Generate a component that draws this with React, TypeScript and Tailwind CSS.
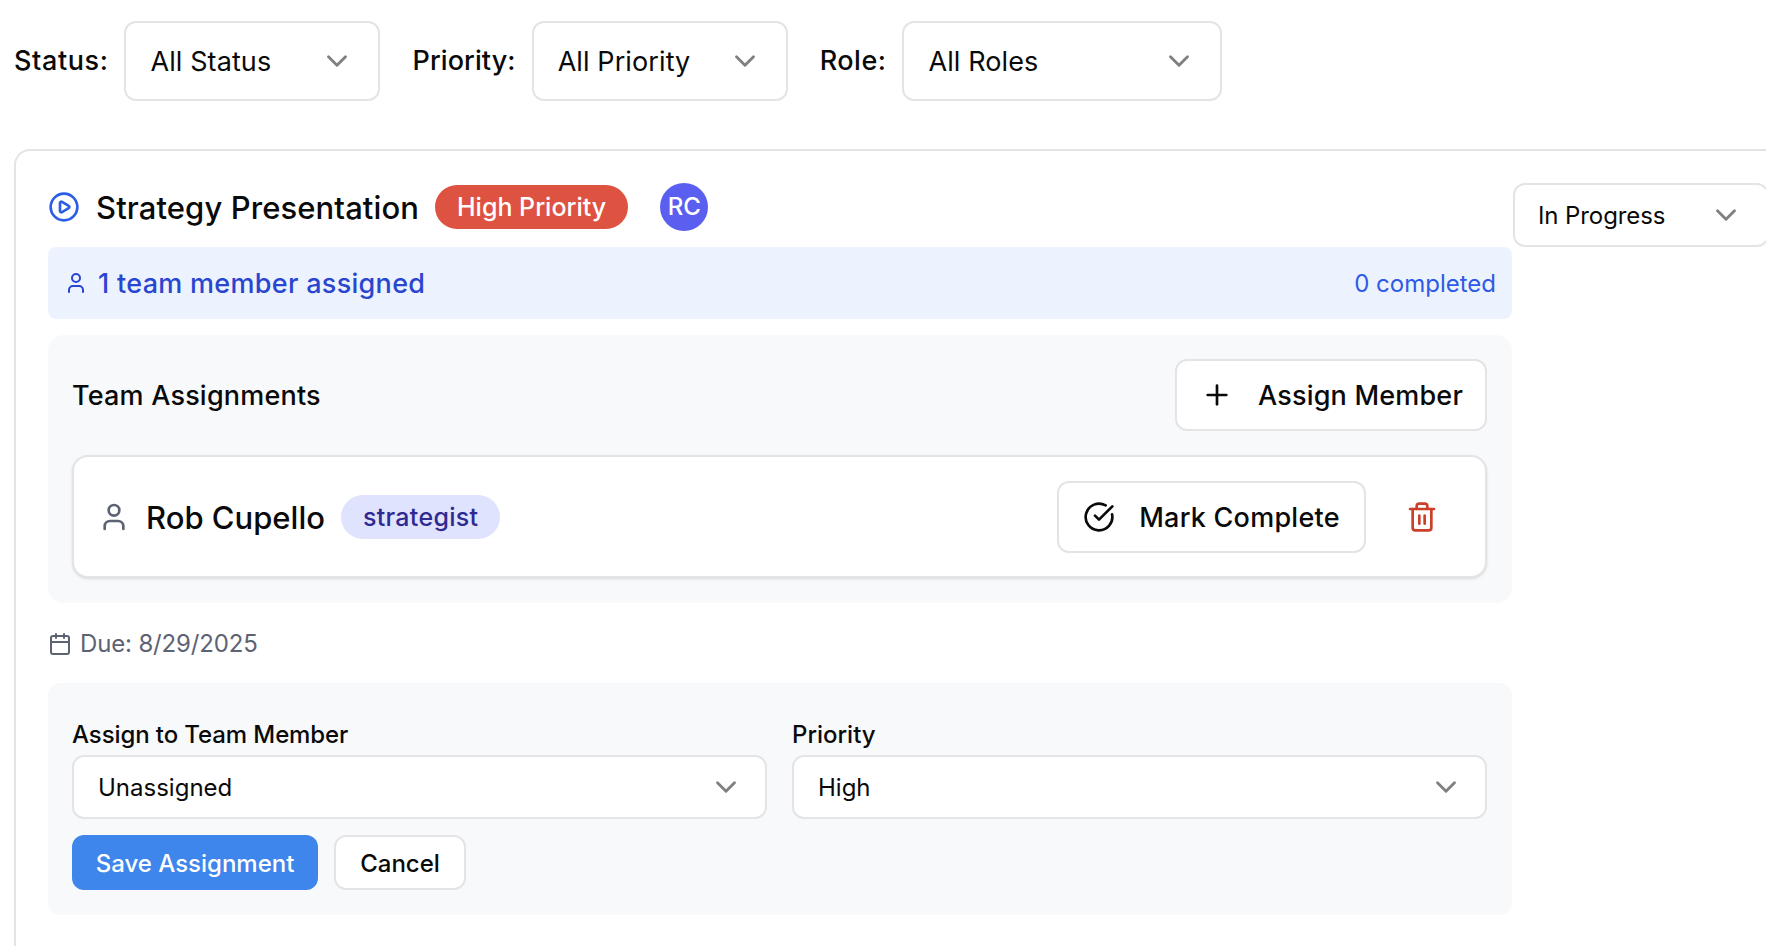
import { Calendar, ChevronDown, CircleCheckBig, CirclePlay, Plus, Trash2, User } from 'lucide-react'

function Select({ label, className }: { label: string; className: string }) {
  return (
    <div className={`flex items-center justify-between bg-white border-2 border-[#e4e4e7] rounded-[12px] ${className}`}>
      <span className="pt-[2px]">{label}</span>
      <ChevronDown className="text-[#808080] shrink-0" size={34} strokeWidth={2} />
    </div>
  )
}

function FilterSelect({ title, value, width, tracking }: { title: string; value: string; width: string; tracking: string }) {
  return (
    <div className="flex items-center gap-[16px]">
      <span className={`font-medium text-[#0a0a0a] pt-[1px] ${tracking}`}>{title}</span>
      <Select label={value} className={`${width} h-[80px] pl-[24px] pr-[24px] text-[#0a0a0a] tracking-[0.1px]`} />
    </div>
  )
}

export default function App() {
  return (
    <div className="w-[1766px] h-[946px] overflow-hidden bg-white pl-[14px] pt-[21px] text-[#0a0a0a] text-[27px] font-['Inter',sans-serif]">
      {/* Filters */}
      <div className="flex items-center gap-[32px]">
        <FilterSelect title="Status:" value="All Status" width="w-[256px]" tracking="tracking-[0.6px]" />
        <FilterSelect title="Priority:" value="All Priority" width="w-[256px]" tracking="tracking-[0.1px]" />
        <FilterSelect title="Role:" value="All Roles" width="w-[320px]" tracking="tracking-[0.5px]" />
      </div>

      {/* Task card */}
      <div className="mt-[48px] w-[1800px] h-[900px] border-2 border-[#e4e4e7] rounded-[16px] pl-[32px] pt-[32px] flex items-start">
        <div className="w-[1464px] shrink-0">
          <div className="flex items-center h-[48px]">
            <CirclePlay className="text-[#2b5de6] shrink-0" size={32} strokeWidth={2} />
            <h2 className="ml-[16px] text-[31px] tracking-[0.1px] font-medium text-[#0a0a0a] leading-none">Strategy Presentation</h2>
            <span className="ml-[16px] h-[44px] px-[22px] pt-[2px] flex items-center rounded-full bg-[#de5241] text-white text-[25px] font-medium">
              High Priority
            </span>
            <span className="ml-[32px] w-[48px] h-[48px] rounded-full bg-[#5b5fef] text-white text-[24px] font-medium flex items-center justify-center">
              RC
            </span>
          </div>

          <div className="mt-[16px] h-[72px] bg-[#edf3fe] rounded-[8px] flex items-center justify-between pl-[16px] pr-[16px]">
            <div className="flex items-center gap-[10px] text-[#2a46d0] font-medium text-[27px] tracking-[0.3px]">
              <User size={24} strokeWidth={2} />
              <span className="pt-[2px]">1 team member assigned</span>
            </div>
            <span className="text-[#2f5ae6] text-[24px] pt-[1px]">0 completed</span>
          </div>

          <div className="mt-[16px] h-[268px] bg-[#f8f9fb] rounded-[16px] pl-[24px] pr-[25px] pt-[24px]">
            <div className="flex items-center justify-between">
              <h3 className="font-medium tracking-[0.2px] pt-[2px]">Team Assignments</h3>
              <button className="h-[72px] w-[312px] bg-white border-2 border-[#e4e4e7] rounded-[12px] flex items-center justify-center gap-[25px] pl-[2px] font-medium tracking-[0.2px]">
                <Plus size={32} strokeWidth={2} />
                <span className="pt-[2px]">Assign Member</span>
              </button>
            </div>
            <div className="mt-[24px] h-[123px] bg-white border-2 border-[#e4e4e7] rounded-[16px] shadow-sm flex items-center justify-between pl-[24px] pr-[47px]">
              <div className="flex items-center">
                <User className="text-[#5d6373]" size={32} strokeWidth={2} />
                <span className="ml-[16px] pt-[3px] text-[31px] font-medium">Rob Cupello</span>
                <span className="ml-[16px] h-[44px] px-[22px] pt-[3px] flex items-center rounded-full bg-[#dfe3fd] text-[#2f2a92] text-[25px] font-medium tracking-[0.3px]">
                  strategist
                </span>
              </div>
              <div className="flex items-center gap-[40px]">
                <button className="h-[72px] w-[309px] bg-white border-2 border-[#e4e4e7] rounded-[12px] flex items-center justify-center gap-[24px] font-medium tracking-[0.25px]">
                  <CircleCheckBig size={32} strokeWidth={2} />
                  <span className="pt-[3px]">Mark Complete</span>
                </button>
                <Trash2 className="text-[#cc3f29]" size={32} strokeWidth={2} />
              </div>
            </div>
          </div>

          <div className="mt-[23px] flex items-center gap-[8px] text-[24px] tracking-[-0.15px] text-[#5d6373]">
            <Calendar size={24} strokeWidth={2} />
            <span>Due: 8/29/2025</span>
          </div>

          <div className="mt-[21px] h-[232px] bg-[#f8f9fb] rounded-[12px] pl-[24px] pr-[25px] pt-[34px]">
            <div className="grid grid-cols-2 gap-[25px] text-[24px]">
              <div>
                <label className="block font-medium tracking-[-0.1px] leading-[36px] mb-[2px]">Assign to Team Member</label>
                <Select label="Unassigned" className="h-[64px] pl-[24px] pr-[22px]" />
              </div>
              <div>
                <label className="block font-medium leading-[36px] mb-[2px]">Priority</label>
                <Select label="High" className="h-[64px] pl-[24px] pr-[22px]" />
              </div>
            </div>
            <div className="mt-[16px] flex items-center gap-[16px] text-[24px] font-medium">
              <button className="h-[55px] w-[246px] pt-[2px] rounded-[12px] bg-[#3e85ec] text-white">Save Assignment</button>
              <button className="h-[55px] w-[132px] pt-[2px] rounded-[12px] bg-white border-2 border-[#e4e4e7]">Cancel</button>
            </div>
          </div>
        </div>

        <Select label="In Progress" className="ml-[1px] w-[256px] h-[64px] pl-[23px] pr-[24px] text-[24px] tracking-[-0.1px] shrink-0" />
      </div>
    </div>
  )
}
